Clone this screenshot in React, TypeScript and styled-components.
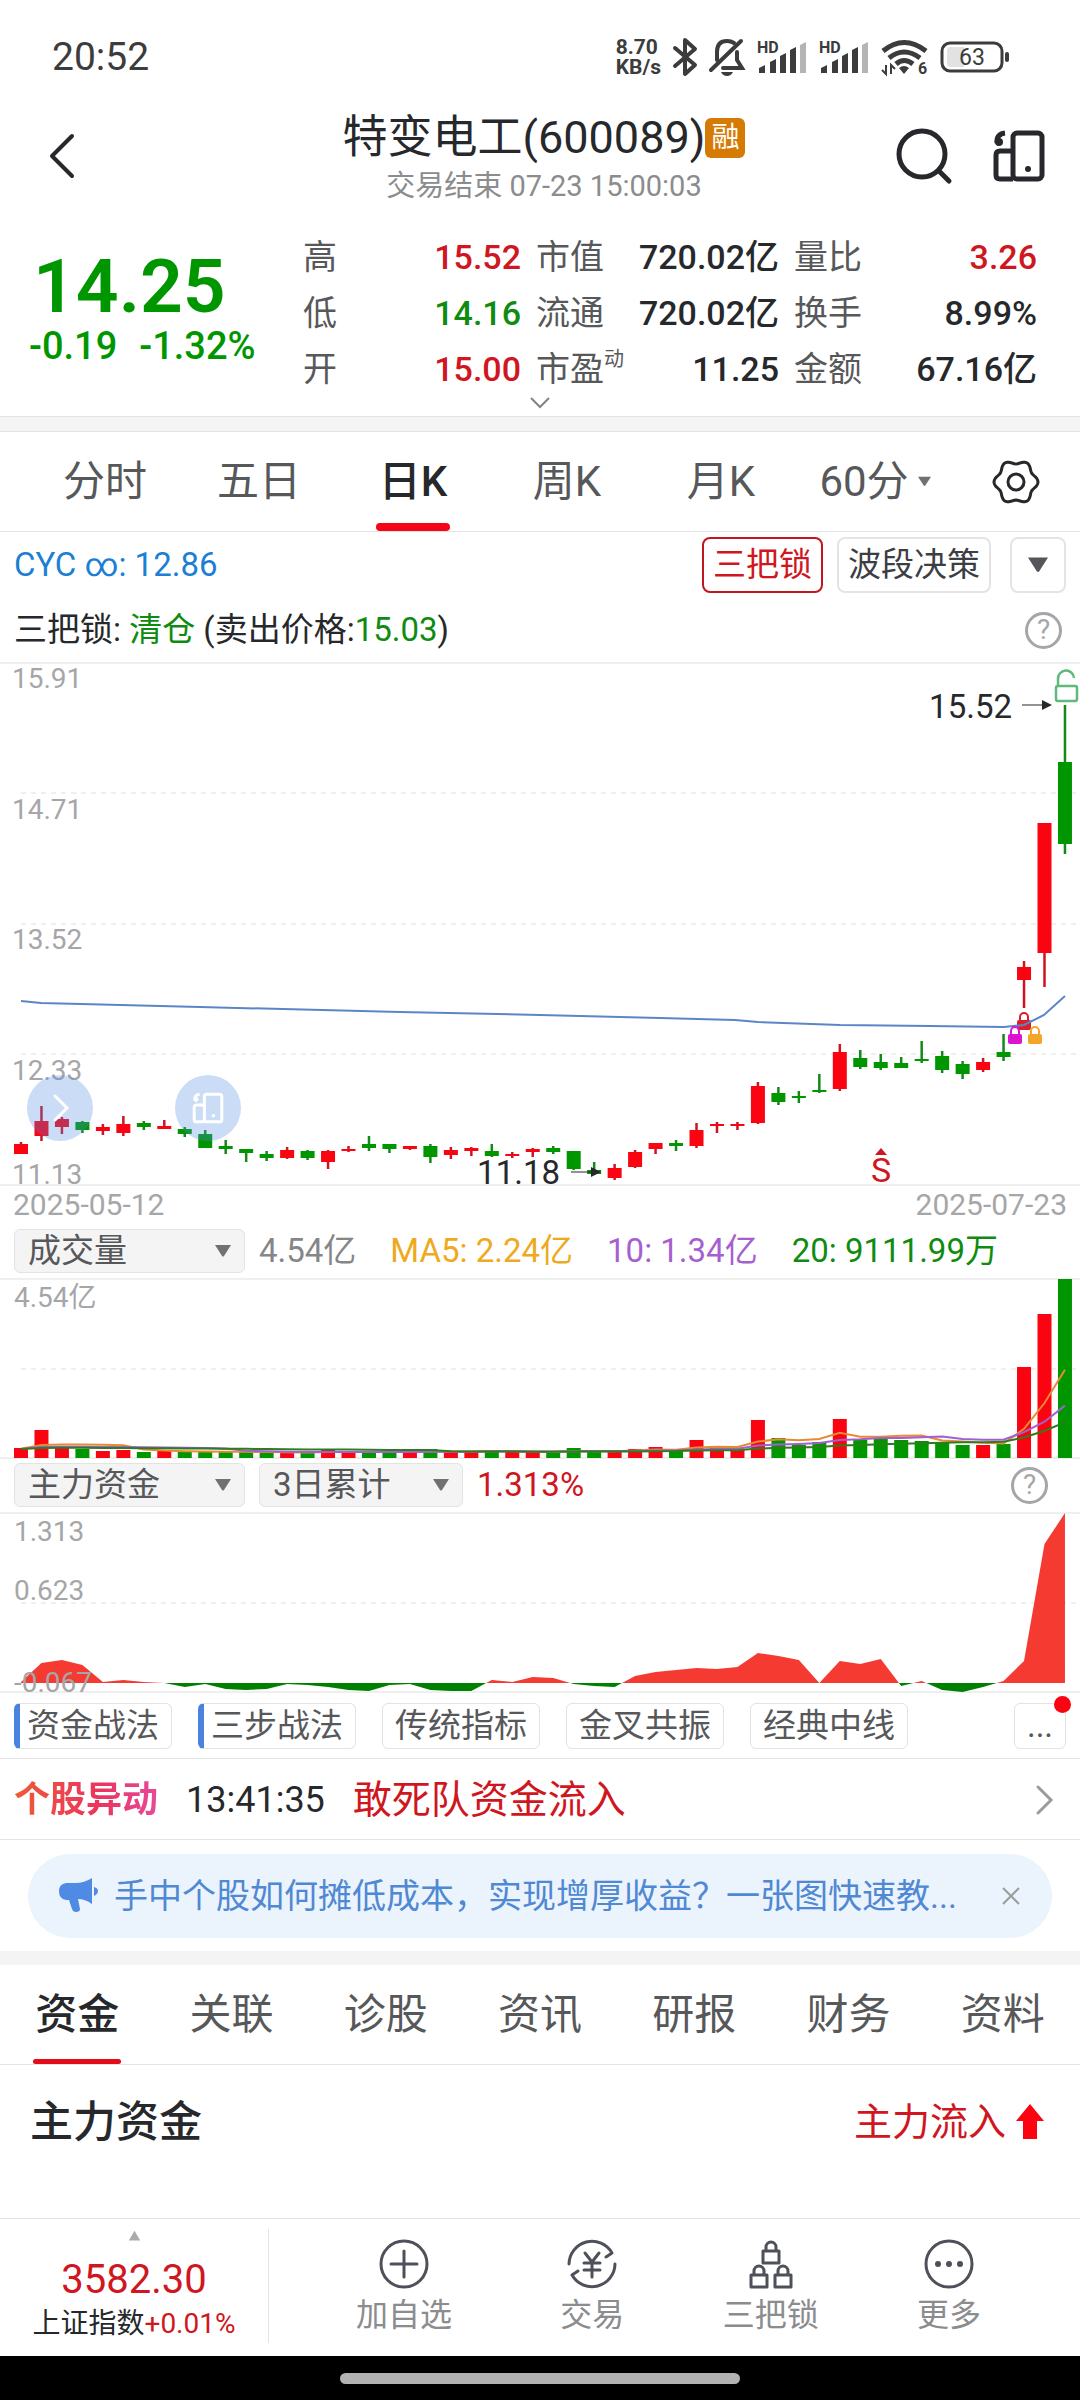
import React from "react";
import styled, { createGlobalStyle, css } from "styled-components";

const RED = "#d01620";
const GREEN = "#0f8c10";
const UP = "#f90410";
const DOWN = "#009600";
const INK = "#26282b";
const GREY = "#57585a";
const MUTED = "#8b8c8e";
const AXIS = "#a6a6a8";
const LINE = "#e3e3e3";
const FAINT = "#efefef";
const FONT = 'Roboto, "Noto Sans CJK SC", sans-serif';

const GlobalStyle = createGlobalStyle`
  *, *::before, *::after { box-sizing: border-box; }
  body { margin: 0; background: #fff; color: ${INK}; font-family: ${FONT}; }
  button, select { font: inherit; color: inherit; }
  button { padding: 0; border: 0; background: none; cursor: pointer; }
  h1, h2, p, dl, dd { margin: 0; font-weight: 400; }
  svg { display: block; overflow: visible; }
  svg text { font-family: ${FONT}; }
`;

const Page = styled.main`
  display: flex;
  flex-direction: column;
  min-height: 100vh;
`;

const StatusBar = styled.div`
  display: flex;
  align-items: center;
  justify-content: space-between;
  height: 100px;
  padding: 14px 70px 0 52px;
  font-size: 39px;
  color: #3c3c3c;
`;

const StatusIcons = styled.div`
  display: flex;
  align-items: center;
  gap: 12px;
`;

const NetSpeed = styled.span`
  font-size: 21px;
  line-height: 20px;
  font-weight: 700;
`;

const Header = styled.header`
  display: grid;
  grid-template-columns: 1fr auto 1fr;
  align-items: center;
  height: 112px;
  padding: 0 36px 0 44px;
`;

const TitleBlock = styled.div`
  display: flex;
  flex-direction: column;
  align-items: center;
`;

const Title = styled.h1`
  display: flex;
  align-items: center;
  font-size: 45px;
  line-height: 60px;
`;

const Badge = styled.span`
  width: 40px;
  border-radius: 6px;
  background: #d57b03;
  color: #fff;
  font-size: 28px;
  line-height: 40px;
  text-align: center;
`;

const SubTitle = styled.p`
  font-size: 29px;
  line-height: 36px;
  color: ${MUTED};
`;

const HeaderActions = styled.div`
  display: flex;
  align-items: center;
  justify-content: flex-end;
  gap: 42px;
`;

const Quote = styled.section`
  display: grid;
  grid-template-columns: 288px 218fr 243fr 243fr;
  column-gap: 15px;
  height: 185px;
  padding: 17px 43px 0 0;
`;

const PriceBlock = styled.div`
  padding: 20px 0 0 29px;
  color: ${DOWN};
`;

const Price = styled.p`
  padding-left: 4px;
  font-size: 75px;
  line-height: 75px;
  font-weight: 600;
`;

const Change = styled.p`
  display: flex;
  gap: 22px;
  font-size: 38px;
  line-height: 44px;
  font-weight: 500;
`;

const StatColumn = styled.dl`
  display: flex;
  flex-direction: column;
`;

const Stat = styled.div`
  display: flex;
  align-items: center;
  justify-content: space-between;
  height: 56px;
  font-size: 34px;
  line-height: 40px;
`;

const StatLabel = styled.dt`
  display: flex;
  color: ${GREY};
`;

const StatMark = styled.sup`
  font-size: 20px;
  line-height: 20px;
`;

const StatValue = styled.dd<{ $color?: string }>`
  font-weight: 500;
  color: ${(p) => p.$color ?? INK};
`;

const Expand = styled.button`
  display: flex;
  justify-content: center;
  height: 19px;
`;

const Band = styled.div<{ $lined?: boolean }>`
  height: ${(p) => (p.$lined ? 16 : 14)}px;
  background: #f4f4f4;
  ${(p) => p.$lined && css`border: solid ${LINE}; border-width: 1px 0;`}
`;

const TabBar = styled.nav<{ $inset?: number }>`
  display: flex;
  height: 100px;
  padding-left: ${(p) => p.$inset ?? 0}px;
  border-bottom: 1px solid ${LINE};
`;

const Tab = styled.button<{ $active?: boolean }>`
  position: relative;
  display: flex;
  flex: 1;
  align-items: center;
  justify-content: center;
  gap: 9px;
  font-size: 42px;
  line-height: 56px;
  font-weight: ${(p) => (p.$active ? 500 : 400)};
  color: ${(p) => (p.$active ? INK : GREY)};
`;

const Indicator = styled.i<{ $wide?: boolean }>`
  position: absolute;
  bottom: 0;
  left: 50%;
  width: ${(p) => (p.$wide ? 88 : 74)}px;
  height: ${(p) => (p.$wide ? 5 : 8)}px;
  border-radius: 4px;
  background: ${(p) => (p.$wide ? "#e20c1a" : "#f50614")};
  transform: translateX(-50%);
`;

const GearButton = styled.button`
  display: flex;
  align-items: center;
  justify-content: center;
  width: 128px;
`;

const Toolbar = styled.div<{ $height: number }>`
  display: flex;
  align-items: center;
  gap: 14px;
  height: ${(p) => p.$height}px;
  padding: 0 14px;
  font-size: 33px;
  line-height: 40px;
  white-space: nowrap;
`;

const Tint = styled.span<{ $color: string }>`
  color: ${(p) => p.$color};
`;

const Push = styled.span<{ $color?: string }>`
  margin-right: auto;
  color: ${(p) => p.$color ?? INK};
`;

const BoxButton = styled.button<{ $active?: boolean }>`
  display: flex;
  align-items: center;
  justify-content: center;
  height: 56px;
  min-width: 56px;
  padding: 0 9px;
  border: 2px solid ${(p) => (p.$active ? "#c3151e" : "#e4e4e4")};
  border-radius: 8px;
  color: ${(p) => (p.$active ? RED : "#3c3e44")};
`;

const MenuButton = styled(BoxButton)`
  margin-left: 5px;
`;

const HelpButton = styled.button<{ $inset?: boolean }>`
  width: 37px;
  height: 37px;
  margin-right: ${(p) => (p.$inset ? 18 : 4)}px;
  border: 3px solid ${AXIS};
  border-radius: 50%;
  color: ${AXIS};
  font-size: 28px;
  line-height: 30px;
`;

const ChartArea = styled.div`
  position: relative;
`;

const Chart = styled.svg`
  width: 100%;
  height: auto;
`;

const FloatButton = styled.button<{ $left: number }>`
  position: absolute;
  top: 413px;
  left: ${(p) => p.$left}px;
  display: flex;
  align-items: center;
  justify-content: center;
  width: 66px;
  height: 66px;
  border-radius: 50%;
  background: rgba(80, 140, 225, 0.3);
`;

const Dates = styled.div`
  display: flex;
  justify-content: space-between;
  height: 40px;
  padding: 0 13px;
  font-size: 30px;
  line-height: 38px;
  color: ${AXIS};
`;

const SelectBox = styled.label<{ $width: number }>`
  position: relative;
  display: flex;
  align-items: center;
  width: ${(p) => p.$width}px;
`;

const Select = styled.select`
  width: 100%;
  height: 44px;
  padding: 0 13px;
  border: 1px solid ${LINE};
  border-radius: 6px;
  background: #f4f4f4;
  color: ${GREY};
  line-height: 40px;
  appearance: none;
`;

const SelectArrow = styled.span`
  position: absolute;
  right: 14px;
  pointer-events: none;
`;

const Averages = styled.div`
  display: flex;
  gap: 34px;
  line-height: 44px;
`;

const Chips = styled.div`
  display: flex;
  align-items: center;
  gap: 26px;
  height: 65px;
  padding: 0 14px;
  border-bottom: 1px solid ${LINE};
`;

const Chip = styled.button<{ $marked?: boolean }>`
  width: 158px;
  height: 46px;
  border: 1px solid ${LINE};
  border-radius: 6px;
  color: ${GREY};
  font-size: 33px;
  line-height: 40px;
  ${(p) => p.$marked && css`border-left: 6px solid #4a83df; padding-right: 5px;`}
`;

const MoreChip = styled(Chip)`
  position: relative;
  width: 52px;
  margin-left: auto;
`;

const Dot = styled.i`
  position: absolute;
  top: -8px;
  right: -6px;
  width: 17px;
  height: 17px;
  border-radius: 50%;
  background: ${UP};
`;

const EventRow = styled.a`
  display: flex;
  align-items: center;
  height: 81px;
  padding: 2px 24px 0 14px;
  border-bottom: 1px solid ${LINE};
  color: ${INK};
  font-size: 39px;
  line-height: 48px;
  text-decoration: none;
`;

const EventTag = styled.strong`
  margin-right: 28px;
  background: linear-gradient(90deg, #ef5a34, #ea3560 60%, #e54a9a);
  background-clip: text;
  color: transparent;
  font-size: 36px;
`;

const EventTime = styled.time`
  margin-right: 28px;
  font-size: 36px;
`;

const Notice = styled.div`
  display: flex;
  align-items: center;
  height: 84px;
  margin: 14px 28px 13px;
  padding: 0 29px 0 30px;
  border-radius: 42px;
  background: #ebf3fc;
`;

const NoticeLink = styled.a`
  flex: 1;
  margin-left: 16px;
  color: #4f88d3;
  font-size: 34px;
  line-height: 52px;
  text-decoration: none;
  white-space: nowrap;
`;

const Section = styled.section`
  display: flex;
  align-items: center;
  justify-content: space-between;
  height: 114px;
  padding: 0 34px 0 30px;
`;

const SectionTitle = styled.h2`
  font-size: 43px;
  line-height: 56px;
  font-weight: 500;
`;

const Flow = styled.p`
  display: flex;
  align-items: center;
  gap: 8px;
  color: ${RED};
  font-size: 38px;
  line-height: 48px;
`;

const Footer = styled.footer`
  margin-top: auto;
`;

const BottomBar = styled.div`
  display: flex;
  height: 138px;
  border-top: 1px solid ${LINE};
`;

const IndexButton = styled.button`
  display: flex;
  flex-direction: column;
  align-items: center;
  width: 269px;
  margin: 10px 0 13px;
  border-right: 1px solid ${LINE};
`;

const IndexValue = styled.span`
  margin-top: 14px;
  color: ${RED};
  font-size: 40px;
  line-height: 48px;
`;

const IndexName = styled.span`
  font-size: 28px;
  line-height: 40px;
`;

const Actions = styled.nav`
  display: grid;
  flex: 1;
  grid-template-columns: 116px 64px 96px 64px;
  justify-content: space-between;
  padding: 20px 99px 0 77px;
`;

const Action = styled.button`
  display: flex;
  flex-direction: column;
  align-items: center;
  gap: 6px;
  color: ${MUTED};
  font-size: 32px;
  line-height: 40px;
  white-space: nowrap;
`;

const GestureBar = styled.div`
  display: flex;
  align-items: center;
  justify-content: center;
  height: 44px;
  background: #000;
`;

const Handle = styled.i`
  width: 37%;
  height: 11px;
  border-radius: 6px;
  background: #b2b2b2;
`;

/* ---------- data ---------- */

type Candle = [up: 0 | 1, top: number, bottom: number, high: number, low: number];

const candles: Candle[] = [
  [1, 481, 491, 479, 491], [1, 458, 473, 443, 478], [1, 456, 464, 454, 471], [0, 459, 467, 458, 470],
  [1, 464, 468, 461, 472], [1, 461, 470, 453, 473], [0, 460, 464, 458, 467], [1, 463, 466, 457, 466],
  [0, 466, 471, 464, 474], [0, 471, 485, 467, 485], [0, 483, 486, 477, 491], [0, 486, 490, 486, 499],
  [0, 491, 495, 488, 498], [1, 487, 495, 484, 496], [0, 488, 495, 487, 497], [1, 488, 499, 487, 506],
  [1, 486, 488, 483, 489], [0, 481, 485, 473, 488], [0, 481, 486, 481, 490], [1, 483, 486, 483, 487],
  [0, 483, 494, 481, 500], [1, 487, 492, 484, 496], [1, 485, 488, 484, 493], [0, 488, 493, 481, 494],
  [1, 491, 493, 489, 495], [1, 486, 489, 485, 494], [0, 485, 489, 483, 491], [0, 488, 506, 488, 507],
  [0, 507, 511, 499, 512], [1, 505, 515, 501, 517], [1, 489, 504, 487, 505], [1, 480, 486, 480, 491],
  [0, 480, 483, 477, 488], [1, 467, 483, 460, 485], [1, 461, 463, 459, 470], [1, 461, 463, 459, 467],
  [1, 423, 460, 419, 461], [0, 430, 439, 424, 442], [0, 433, 435, 428, 440], [0, 427, 429, 411, 430],
  [1, 389, 426, 381, 428], [0, 395, 404, 387, 406], [0, 399, 405, 391, 407], [0, 400, 405, 394, 405],
  [0, 396, 398, 378, 400], [0, 393, 407, 388, 410], [0, 401, 411, 398, 416], [1, 399, 407, 395, 409],
  [0, 389, 394, 371, 398], [1, 304, 317, 298, 345], [1, 160, 290, 160, 324], [0, 99, 181, 42, 191],
];

const volumes = [
  10, 28, 12, 9, 7, 8, 6, 7, 6, 6, 6, 6, 6, 5, 5, 8, 6, 6, 6, 6, 9, 6, 6, 8, 6, 6, 5, 10, 7, 6, 9, 11, 8, 18,
  10, 8, 38, 20, 13, 16, 39, 18, 20, 18, 17, 15, 13, 13, 14, 91, 144, 179,
];

const funds = [
  1, 20, 23, 18, 1, 3, 1, 0, -4, -1, -6, -7, -6, -1, -2, -4, -7, -8, -2, -1, -7, -8, -8, 3, 1, 6, 5, -1, -3, -4,
  7, 11, 13, 15, 14, 16, 30, 27, 23, 0, 22, 19, 24, -3, 2, -7, -9, -4, 2, 22, 139, 170,
];

const stats: { label: string; mark?: string; value: string; color?: string }[][] = [
  [
    { label: "高", value: "15.52", color: RED },
    { label: "低", value: "14.16", color: GREEN },
    { label: "开", value: "15.00", color: RED },
  ],
  [
    { label: "市值", value: "720.02亿" },
    { label: "流通", value: "720.02亿" },
    { label: "市盈", mark: "动", value: "11.25" },
  ],
  [
    { label: "量比", value: "3.26", color: RED },
    { label: "换手", value: "8.99%" },
    { label: "金额", value: "67.16亿" },
  ],
];

const centre = (i: number) => 21 + i * 20.47;

const average = (span: number) => {
  const padded = [...Array(span - 1).fill(9), ...volumes];
  return volumes
    .map((_, i) => {
      const sum = padded.slice(i, i + span).reduce((a: number, b: number) => a + b, 0);
      return `${centre(i)},${179 - sum / span}`;
    })
    .join(" ");
};

/* Six-lobed outline of the settings cog. */
const cog = Array.from({ length: 72 }, (_, i) => {
  const angle = (i * Math.PI) / 36;
  const radius = 20 + 2 * Math.cos(6 * angle);
  return `${24 + radius * Math.cos(angle)},${24 + radius * Math.sin(angle)}`;
}).join(" ");

/* ---------- icons ---------- */

const Triangle = ({ size = 16, color = "#707173", up = false }) => (
  <svg width={size} height={size} viewBox="0 0 16 16" aria-hidden="true">
    <path d={up ? "M8 2 15 14H1Z" : "M0 2H16L9 13Q8 14 7 13Z"} fill={color} />
  </svg>
);

const Signal = () => (
  <svg width="50" height="36" viewBox="0 0 50 36" aria-hidden="true">
    <text x="0" y="14" fontSize="16" fontWeight="700" fill="#3c3c3c">HD</text>
    <g fill="#3c3c3c">
      <path d="M2 34V29L8 26V34ZM13 34V23L19 20V34ZM23 34V17L29 14V34ZM33 34V11L39 8V34Z" />
      <path d="M43 34V6L49 3V34Z" fill="#b4b4b4" />
    </g>
  </svg>
);

const PhoneSplit = ({ size, color, weight = 4 }: { size: number; color: string; weight?: number }) => (
  <svg width={size} height={size} viewBox="0 0 50 50" fill="none" stroke={color} strokeWidth={weight} aria-hidden="true">
    <rect x="19" y="2" width="29" height="46" rx="4" />
    <path d="M19 20H6Q2 20 2 24V44Q2 48 6 48H19" />
    <path d="M3 12Q2 3 11 2" />
    <circle cx="5" cy="11" r="4" fill={color} stroke="none" />
    <circle cx="34" cy="38" r="3" fill={color} stroke="none" />
  </svg>
);

const Padlock = ({ x, y, color }: { x: number; y: number; color: string }) => (
  <g transform={`translate(${x} ${y})`}>
    <path d="M3 9V5a4 4 0 0 1 8 0V9" fill="none" stroke={color} strokeWidth="2" />
    <rect x="0" y="8" width="14" height="10" rx="2" fill={color} />
  </g>
);

const StatusStrip = () => (
  <StatusBar>
    <span>20:52</span>
    <StatusIcons>
      <NetSpeed>8.70<br />KB/s</NetSpeed>
      <svg width="24" height="38" viewBox="0 0 24 38" fill="none" stroke="#3c3c3c" strokeWidth="4" strokeLinejoin="round" strokeLinecap="round" aria-hidden="true">
        <path d="M2 10 22 27 12 36V2L22 11 2 28" />
      </svg>
      <svg width="36" height="38" viewBox="0 0 36 38" fill="none" stroke="#3c3c3c" strokeWidth="4" strokeLinecap="round" aria-hidden="true">
        <path d="M8 22V14Q8 3 18 3Q22 3 25 5M28 14V22L33 30H14" />
        <path d="M2 32 32 3" />
        <path d="M12 34H24Q22 38 18 38Q14 38 12 34Z" fill="#3c3c3c" stroke="none" />
      </svg>
      <Signal />
      <Signal />
      <svg width="47" height="36" viewBox="0 0 47 36" fill="none" stroke="#3c3c3c" strokeWidth="5" aria-hidden="true">
        <path d="M2 12Q23-5 45 12M8 19Q23 7 39 19M15 25Q23 18 32 25" />
        <path d="M18 29Q23 25 28 29L23 35Z" fill="#3c3c3c" stroke="none" />
        <path d="M5 26V35L1 31M10 35V26L14 30" strokeWidth="2" />
        <text x="37" y="35" fontSize="16" fontWeight="700" fill="#3c3c3c" stroke="none">6</text>
      </svg>
      <svg width="70" height="32" viewBox="0 0 70 32" aria-hidden="true">
        <rect x="2" y="2" width="60" height="28" rx="8" fill="none" stroke="#3c3c3c" strokeWidth="3" />
        <path d="M11 6H24V26H11Q7 26 7 22V10Q7 6 11 6Z" fill="#e2e2e2" />
        <rect x="65" y="11" width="4" height="10" rx="2" fill="#3c3c3c" />
        <text x="32" y="24" fontSize="23" textAnchor="middle" fill="#3c3c3c">63</text>
      </svg>
    </StatusIcons>
  </StatusBar>
);

/* ---------- charts ---------- */

const priceLabels: [string, number][] = [
  ["15.91", 25], ["14.71", 156], ["13.52", 286], ["12.33", 417], ["11.13", 521],
];

const PriceChart = () => (
  <Chart viewBox="0 -1 1080 524" role="img" aria-label="日K">
    <g stroke={FAINT} strokeWidth="2">
      <path d="M0 0H1080M0 522H1080" />
      <path d="M21 130H1080M21 261H1080M21 391H1080" strokeDasharray="5 5" />
    </g>
    <g fontSize="28" fill={AXIS}>
      {priceLabels.map(([label, y]) => <text key={label} x="12" y={y}>{label}</text>)}
    </g>
    {candles.map(([up, top, bottom, high, low], i) => (
      <g key={i} fill={up ? UP : DOWN}>
        <rect x={centre(i) - 1.25} y={high} width="2.5" height={low - high} fill={up ? "#cf1420" : "#138a18"} />
        <rect x={centre(i) - 7} y={top} width="14" height={bottom - top} />
      </g>
    ))}
    <Padlock x={1017} y={349} color="#d9202a" />
    <polyline
      points="21,338 41,340 200,344 400,349 540,352 660,355 735,357 758,359 840,362 930,363 1004,364 1024,362 1044,352 1065,333"
      fill="none" stroke="#5b86c6" strokeWidth="2"
    />
    <Padlock x={1008} y={363} color="#dc14cf" />
    <Padlock x={1028} y={363} color="#f5a52a" />
    <g fill="none" stroke="#5fb97b" strokeWidth="2.5">
      <path d="M1058 23V16a8 8 0 0 1 16-1" />
      <rect x="1056" y="23" width="21" height="15" rx="2" />
    </g>
    <g fontSize="33" fill={INK}>
      <text x="1012" y="55" textAnchor="end">15.52</text>
      <text x="560" y="521" textAnchor="end">11.18</text>
      <path d="M1022 41.500H1042V37L1052 42L1042 47V42.500H1022Z" />
      <path d="M571 508.500H591V504L601 509L591 514V509.500H571Z" />
    </g>
    <text x="881" y="519" fontSize="34" textAnchor="middle" fill={RED}>S</text>
    <path d="M881 485 887 492H875Z" fill={RED} />
  </Chart>
);

const VolumeChart = () => (
  <Chart viewBox="0 -3 1080 183" role="img" aria-label="成交量">
    <g stroke={FAINT} strokeWidth="2">
      <path d="M0 0H1080M0 179H1080" />
      <path d="M21 90H1080" strokeDasharray="5 5" />
    </g>
    <text x="14" y="28" fontSize="28" fill={AXIS}>4.54亿</text>
    {volumes.map((v, i) => (
      <rect key={i} x={centre(i) - 7} y={179 - v} width="14" height={v} fill={candles[i][0] ? UP : DOWN} />
    ))}
    <g fill="none" strokeWidth="2">
      <polyline points={average(5)} stroke="#e88a35" />
      <polyline points={average(10)} stroke="#a25fcf" />
      <polyline points={average(20)} stroke="#2c7d1c" />
    </g>
  </Chart>
);

const FundsChart = () => {
  const area = `M${centre(0)} 170 ${funds.map((v, i) => `L${centre(i)} ${170 - v}`).join(" ")} L${centre(51)} 170Z`;
  return (
    <Chart viewBox="0 -2 1080 183" role="img" aria-label="主力资金">
      <clipPath id="above"><rect x="0" y="0" width="1080" height="170" /></clipPath>
      <clipPath id="below"><rect x="0" y="170" width="1080" height="10" /></clipPath>
      <g stroke={FAINT} strokeWidth="2">
        <path d="M0 0H1080M0 179H1080" />
        <path d="M21 90H1080" strokeDasharray="5 5" />
      </g>
      <path d={area} fill="#f53a32" clipPath="url(#above)" />
      <path d={area} fill="#008000" clipPath="url(#below)" />
      <g fontSize="28" fill={AXIS}>
        <text x="14" y="28">1.313</text>
        <text x="14" y="87">0.623</text>
        <text x="14" y="179">-0.067</text>
      </g>
    </Chart>
  );
};

const periods = ["分时", "五日", "日K", "周K", "月K"];
const sections = ["资金", "关联", "诊股", "资讯", "研报", "财务", "资料"];
const chips = ["资金战法", "三步战法", "传统指标", "金叉共振", "经典中线"];

export default function App() {
  return (
    <Page>
      <GlobalStyle />
      <StatusStrip />
      <Header>
        <button aria-label="返回">
          <svg width="36" height="48" viewBox="0 0 36 48" fill="none" stroke={INK} strokeWidth="4" strokeLinecap="round" strokeLinejoin="round">
            <path d="M28 4 8 24 28 44" />
          </svg>
        </button>
        <TitleBlock>
          <Title>特变电工(600089)<Badge>融</Badge></Title>
          <SubTitle>交易结束 07-23 15:00:03</SubTitle>
        </TitleBlock>
        <HeaderActions>
          <button aria-label="搜索">
            <svg width="56" height="56" viewBox="0 0 56 56" fill="none" stroke={INK} strokeWidth="5" strokeLinecap="round">
              <circle cx="26" cy="26" r="23" />
              <path d="M43 43 53 53" />
            </svg>
          </button>
          <button aria-label="横屏"><PhoneSplit size={50} color={INK} weight={5} /></button>
        </HeaderActions>
      </Header>

      <Quote>
        <PriceBlock>
          <Price>14.25</Price>
          <Change><span>-0.19</span><span>-1.32%</span></Change>
        </PriceBlock>
        {stats.map((column, i) => (
          <StatColumn key={i}>
            {column.map((s) => (
              <Stat key={s.label}>
                <StatLabel>{s.label}{s.mark && <StatMark>{s.mark}</StatMark>}</StatLabel>
                <StatValue $color={s.color}>{s.value}</StatValue>
              </Stat>
            ))}
          </StatColumn>
        ))}
      </Quote>
      <Expand aria-label="展开">
        <svg width="22" height="12" viewBox="0 0 22 12" fill="none" stroke="#828385" strokeWidth="2">
          <path d="M2 1 11 10 20 1" />
        </svg>
      </Expand>
      <Band $lined />

      <TabBar $inset={28}>
        {periods.map((p) => (
          <Tab key={p} $active={p === "日K"}>{p}{p === "日K" && <Indicator />}</Tab>
        ))}
        <Tab>60分<Triangle size={13} /></Tab>
        <GearButton aria-label="设置">
          <svg width="48" height="48" viewBox="0 0 48 48" fill="none" stroke={INK} strokeWidth="3" strokeLinejoin="round">
            <polygon points={cog} />
            <circle cx="24" cy="24" r="8" />
          </svg>
        </GearButton>
      </TabBar>

      <Toolbar $height={66}>
        <Push $color="#1c7fd4">CYC ∞: 12.86</Push>
        <BoxButton $active>三把锁</BoxButton>
        <BoxButton>波段决策</BoxButton>
        <MenuButton aria-label="更多指标"><Triangle size={20} color="#54565c" /></MenuButton>
      </Toolbar>
      <Toolbar $height={64}>
        <Push>三把锁: <Tint $color={GREEN}>清仓</Tint> (卖出价格:<Tint $color={GREEN}>15.03</Tint>)</Push>
        <HelpButton aria-label="三把锁说明">?</HelpButton>
      </Toolbar>

      <ChartArea>
        <PriceChart />
        <FloatButton $left={27} aria-label="向右">
          <svg width="20" height="30" viewBox="0 0 20 30" fill="none" stroke="#fff" strokeWidth="3" strokeLinecap="round">
            <path d="M5 3 17 15 5 27" />
          </svg>
        </FloatButton>
        <FloatButton $left={175} aria-label="横屏"><PhoneSplit size={30} color="#fff" weight={5} /></FloatButton>
      </ChartArea>
      <Dates><span>2025-05-12</span><span>2025-07-23</span></Dates>

      <Toolbar $height={50}>
        <SelectBox $width={231}>
          <Select aria-label="指标"><option>成交量</option></Select>
          <SelectArrow><Triangle /></SelectArrow>
        </SelectBox>
        <Averages>
          <Tint $color="#858688">4.54亿</Tint>
          <Tint $color="#efa920">MA5: 2.24亿</Tint>
          <Tint $color="#a65fd0">10: 1.34亿</Tint>
          <Tint $color={GREEN}>20: 9111.99万</Tint>
        </Averages>
      </Toolbar>
      <VolumeChart />

      <Toolbar $height={52}>
        <SelectBox $width={231}>
          <Select aria-label="指标"><option>主力资金</option></Select>
          <SelectArrow><Triangle /></SelectArrow>
        </SelectBox>
        <SelectBox $width={204}>
          <Select aria-label="周期"><option>3日累计</option></Select>
          <SelectArrow><Triangle /></SelectArrow>
        </SelectBox>
        <Push $color={RED}>1.313%</Push>
        <HelpButton $inset aria-label="主力资金说明">?</HelpButton>
      </Toolbar>
      <FundsChart />

      <Chips>
        {chips.map((c, i) => <Chip key={c} $marked={i < 2}>{c}</Chip>)}
        <MoreChip aria-label="更多">...<Dot /></MoreChip>
      </Chips>

      <EventRow href="#events">
        <EventTag>个股异动</EventTag>
        <EventTime>13:41:35</EventTime>
        <Push $color={RED}>敢死队资金流入</Push>
        <svg width="22" height="32" viewBox="0 0 22 32" fill="none" stroke="#9b9c9e" strokeWidth="3" strokeLinecap="round" aria-hidden="true">
          <path d="M4 3 17 16 4 29" />
        </svg>
      </EventRow>

      <Notice>
        <svg width="40" height="36" viewBox="0 0 40 36" fill="#4f8ae4" aria-hidden="true">
          <path d="M8 5H18Q26 5 34 0V26Q27 21 20 21L22 31Q22 34 18 34Q15 34 14 31L11 22H8Q1 21 1 13Q1 6 8 5Z" />
          <path d="M36 9Q40 10 40 13T36 18Z" />
        </svg>
        <NoticeLink href="#lesson">手中个股如何摊低成本，实现增厚收益？一张图快速教...</NoticeLink>
        <button aria-label="关闭">
          <svg width="24" height="24" viewBox="0 0 24 24" stroke="#9b9c9e" strokeWidth="2">
            <path d="M4 4 20 20M20 4 4 20" />
          </svg>
        </button>
      </Notice>
      <Band />

      <TabBar>
        {sections.map((s, i) => (
          <Tab key={s} $active={i === 0}>{s}{i === 0 && <Indicator $wide />}</Tab>
        ))}
      </TabBar>
      <Section>
        <SectionTitle>主力资金</SectionTitle>
        <Flow>
          主力流入
          <svg width="32" height="38" viewBox="0 0 32 38" aria-hidden="true">
            <path d="M16 1 30 18H23V36H9V18H2Z" fill={UP} />
          </svg>
        </Flow>
      </Section>

      <Footer>
        <BottomBar>
          <IndexButton>
            <Triangle size={13} color="#a9aaac" up />
            <IndexValue>3582.30</IndexValue>
            <IndexName>上证指数<Tint $color={RED}>+0.01%</Tint></IndexName>
          </IndexButton>
          <Actions>
            <Action>
              <svg width="50" height="50" viewBox="0 0 50 50" fill="none" stroke="#4f515a" strokeWidth="3" strokeLinecap="round">
                <circle cx="25" cy="25" r="23" />
                <path d="M25 12V38M12 25H38" />
              </svg>
              加自选
            </Action>
            <Action>
              <svg width="50" height="50" viewBox="0 0 50 50" fill="none" stroke="#4f515a" strokeWidth="3" strokeLinecap="round" strokeLinejoin="round">
                <path d="M2 25A23 23 0 0 1 45 14L39 18M48 25A23 23 0 0 1 5 36L11 32" />
                <path d="M18 14 25 23 32 14M17 24H33M17 31H33M25 23V38" />
              </svg>
              交易
            </Action>
            <Action>
              <svg width="50" height="50" viewBox="0 0 50 50" fill="none" stroke="#4f515a" strokeWidth="3" strokeLinejoin="round">
                <path d="M17 12H33V24H17ZM20 12V8A5 5 0 0 1 30 8V12" />
                <path d="M5 36H21V48H5ZM8 36V32A5 5 0 0 1 18 32V36" />
                <path d="M29 36H45V48H29ZM32 36V32A5 5 0 0 1 42 32V36" />
              </svg>
              三把锁
            </Action>
            <Action>
              <svg width="50" height="50" viewBox="0 0 50 50" fill="none" stroke="#4f515a" strokeWidth="3">
                <circle cx="25" cy="25" r="23" />
                <g fill="#4f515a" stroke="none">
                  <circle cx="14" cy="25" r="3" /><circle cx="25" cy="25" r="3" /><circle cx="36" cy="25" r="3" />
                </g>
              </svg>
              更多
            </Action>
          </Actions>
        </BottomBar>
        <GestureBar><Handle /></GestureBar>
      </Footer>
    </Page>
  );
}
